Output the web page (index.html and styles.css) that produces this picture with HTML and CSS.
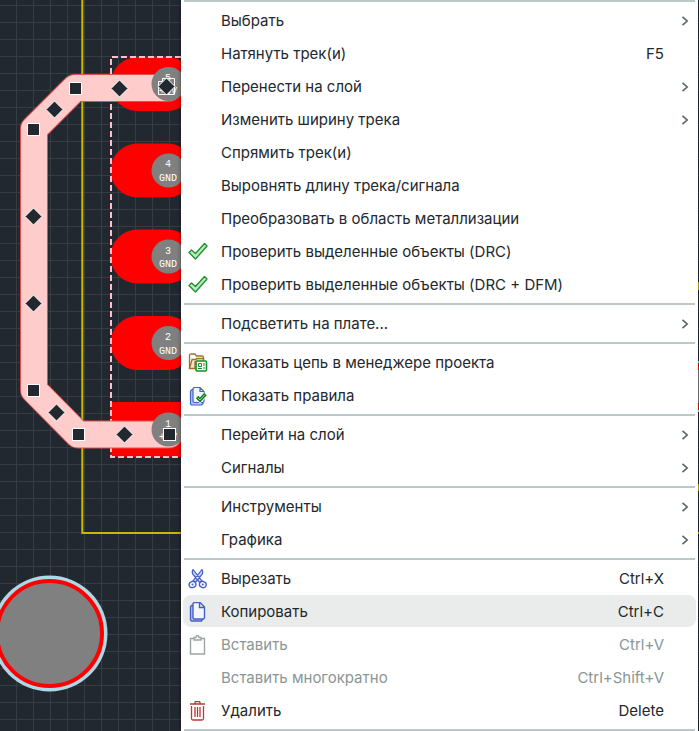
FILE: index.html
```html
<!DOCTYPE html>
<html lang="ru">
<head>
<meta charset="utf-8">
<meta name="viewport" content="width=device-width, initial-scale=1">
<title>Редактор плат</title>
<link rel="stylesheet" href="styles.css">
</head>
<body>
<main class="editor">
  <svg class="board" aria-hidden="true">
    <defs>
      <pattern id="grid" x="16" y="5" width="17" height="17" patternUnits="userSpaceOnUse">
        <path class="grid-line" d="M0 0h17v1H1v16H0z"/>
      </pattern>
      <rect id="pad" x="110.500" y="-27" width="84" height="54" rx="27"/>
      <rect id="node" x="-6" y="-6" width="12" height="12"/>
      <path id="mid" d="M0-8.500L8.500 0 0 8.500-8.500 0z"/>
      <path id="route" d="M168 88H75L34 129V390L78 434.500H169"/>
    </defs>
    <rect width="100%" height="100%" fill="url(#grid)"/>
    <path class="outline" d="M82.300-2V533H699"/>
    <path class="outline-edge" d="M698.500 282v8M698.500 484v7"/>
    <g class="copper">
      <use href="#pad" y="84"/>
      <use href="#pad" y="170.500"/>
      <use href="#pad" y="256.500"/>
      <use href="#pad" y="343"/>
      <rect x="110.500" y="402" width="84" height="55"/>
    </g>
    <path class="bounds" d="M190 57H111V457H190"/>
    <use class="track-edge" href="#route"/>
    <use class="track" href="#route"/>
    <g class="hole">
      <circle cx="168.500" cy="84" r="17"/>
      <circle cx="168.500" cy="170.500" r="17"/>
      <circle cx="168.500" cy="256.500" r="17"/>
      <circle cx="168.500" cy="343" r="17"/>
      <circle cx="168.500" cy="429.500" r="17"/>
    </g>
    <g class="pin">
      <text x="168" y="81">5</text><text x="168" y="94">+5V</text>
      <text x="168" y="167">4</text><text x="168" y="181">GND</text>
      <text x="168" y="254">3</text><text x="168" y="267">GND</text>
      <text x="168" y="340">2</text><text x="168" y="354">GND</text>
      <text x="168" y="427">1</text><text x="168" y="440">+5V</text>
    </g>
    <g class="handle">
      <use href="#node" x="75.500" y="88.500"/>
      <use href="#node" x="33.500" y="129.500"/>
      <use href="#node" x="33.500" y="390.500"/>
      <use href="#node" x="78.500" y="434.500"/>
      <use href="#node" x="169.500" y="434.500"/>
      <use href="#mid" x="119.500" y="88.500"/>
      <use href="#mid" x="54.500" y="109.500"/>
      <use href="#mid" x="33.500" y="216.500"/>
      <use href="#mid" x="33.500" y="303.500"/>
      <use href="#mid" x="56.500" y="412.500"/>
      <use href="#mid" x="124.500" y="434.500"/>
      <path class="hollow" d="M158.500 94.500v-13h4v-3h12v16z"/>
      <use href="#mid" x="166.500" y="86.500"/>
    </g>
    <circle class="mask" cx="49.500" cy="633.500" r="58"/>
    <circle class="ring" cx="49.500" cy="633.500" r="52.500"/>
    <path class="mask-edge" d="M698.500 361v51"/>
    <path class="ring-edge" d="M698.500 363v47"/>
    <path class="hole-edge" d="M698.500 370v33"/>
  </svg>

  <div class="menu" role="menu">
    <hr>
    <button class="item" role="menuitem"><span class="icon"></span><span class="label">Выбрать</span><svg class="arrow" viewBox="0 0 8 10"><path d="M1.500 .8l4.700 4.200-4.700 4.200"/></svg></button>
    <button class="item" role="menuitem"><span class="icon"></span><span class="label">Натянуть трек(и)</span><kbd>F5</kbd></button>
    <button class="item" role="menuitem"><span class="icon"></span><span class="label">Перенести на слой</span><svg class="arrow" viewBox="0 0 8 10"><path d="M1.500 .8l4.700 4.200-4.700 4.200"/></svg></button>
    <button class="item" role="menuitem"><span class="icon"></span><span class="label">Изменить ширину трека</span><svg class="arrow" viewBox="0 0 8 10"><path d="M1.500 .8l4.700 4.200-4.700 4.200"/></svg></button>
    <button class="item" role="menuitem"><span class="icon"></span><span class="label">Спрямить трек(и)</span></button>
    <button class="item" role="menuitem"><span class="icon"></span><span class="label">Выровнять длину трека/сигнала</span></button>
    <button class="item" role="menuitem"><span class="icon"></span><span class="label">Преобразовать в область металлизации</span></button>
    <button class="item" role="menuitem"><svg class="icon check" viewBox="0 0 20 20"><path d="M1 10.500l2.500-2.500 4 3.500L16.500 1.500l2.500 2.500L7.500 17z"/></svg><span class="label">Проверить выделенные объекты (DRC)</span></button>
    <button class="item" role="menuitem"><svg class="icon check" viewBox="0 0 20 20"><path d="M1 10.500l2.500-2.500 4 3.500L16.500 1.500l2.500 2.500L7.500 17z"/></svg><span class="label">Проверить выделенные объекты (DRC + DFM)</span></button>
    <hr>
    <button class="item" role="menuitem"><span class="icon"></span><span class="label">Подсветить на плате...</span><svg class="arrow" viewBox="0 0 8 10"><path d="M1.500 .8l4.700 4.200-4.700 4.200"/></svg></button>
    <hr>
    <button class="item" role="menuitem"><svg class="icon" viewBox="0 0 20 20"><path class="folder" d="M1.500 15.500V2.500q0-1.500 1.500-1.500h4l1.500 2H14q1.500 0 1.500 1.500v3"/><path class="folder front" d="M1.500 15.500L4 6.500h4l1-1h6.500V9H7v6.500z"/><rect class="net" x="8" y="8" width="10.500" height="10" rx="1"/><path class="net thin" d="M10.500 10.500h3v3h-3zM16 10v3M16 14v2M10 15.500h4"/></svg><span class="label">Показать цепь в менеджере проекта</span></button>
    <button class="item" role="menuitem"><svg class="icon" viewBox="0 0 20 20"><path class="page back" d="M5.500 3.500H4L2.500 5v13l1 1h10l1.500-1.500z"/><path class="page" d="M6 1.500h6l4 4v10l-1 1H6l-1-1v-13zM12 1.500v4h4"/><path class="tick-back" d="M9 11l3 3 5.500-6"/><path class="tick" d="M9 11l3 3 5.500-6"/><path class="tick-core" d="M9.500 11.500l2.500 2.500 5-5.500"/></svg><span class="label">Показать правила</span></button>
    <hr>
    <button class="item" role="menuitem"><span class="icon"></span><span class="label">Перейти на слой</span><svg class="arrow" viewBox="0 0 8 10"><path d="M1.500 .8l4.700 4.200-4.700 4.200"/></svg></button>
    <button class="item" role="menuitem"><span class="icon"></span><span class="label">Сигналы</span><svg class="arrow" viewBox="0 0 8 10"><path d="M1.500 .8l4.700 4.200-4.700 4.200"/></svg></button>
    <hr>
    <button class="item" role="menuitem"><span class="icon"></span><span class="label">Инструменты</span><svg class="arrow" viewBox="0 0 8 10"><path d="M1.500 .8l4.700 4.200-4.700 4.200"/></svg></button>
    <button class="item" role="menuitem"><span class="icon"></span><span class="label">Графика</span><svg class="arrow" viewBox="0 0 8 10"><path d="M1.500 .8l4.700 4.200-4.700 4.200"/></svg></button>
    <hr>
    <button class="item" role="menuitem"><svg class="icon bold" viewBox="0 0 20 20"><path class="blade" d="M5 .5Q3.500 3 5 5.500l7 8.500 2-2zM14 .5q1.500 2.500 0 5L7 14l-2-2z"/><ellipse class="page" cx="4.500" cy="15.500" rx="3.400" ry="3" transform="rotate(-20 4.500 15.500)"/><ellipse class="page" cx="14.800" cy="15.500" rx="3.400" ry="3" transform="rotate(20 14.800 15.500)"/><circle class="dot" cx="4.500" cy="15.500" r="1"/><circle class="dot" cx="14.800" cy="15.500" r="1"/></svg><span class="label">Вырезать</span><kbd>Ctrl+X</kbd></button>
    <button class="item active" role="menuitem"><svg class="icon bold" viewBox="0 0 20 20"><path class="page back" d="M5 3.500H3.500l-1 1V18l1 1h10l1-1.500z"/><path class="page" d="M6 .5h6l4.500 4.500v11l-1 1H6l-1-1v-14.500zM11.500.5V5.500h5"/></svg><span class="label">Копировать</span><kbd>Ctrl+C</kbd></button>
    <button class="item" role="menuitem" disabled><svg class="icon clip" viewBox="0 0 20 20"><path d="M6 3.500H2.500v15.500h14V3.500H13M6 5V2.500h2q.2-2 1.500-2t1.500 2h2V5z"/></svg><span class="label">Вставить</span><kbd>Ctrl+V</kbd></button>
    <button class="item" role="menuitem" disabled><span class="icon"></span><span class="label">Вставить многократно</span><kbd>Ctrl+Shift+V</kbd></button>
    <button class="item" role="menuitem"><svg class="icon bin" viewBox="0 0 20 20"><path d="M2 3h15M7 2.500V1.500q0-1 1-1h3q1 0 1 1V2.500M3.500 5V17.500q0 1.500 1.500 1.500h9q1.500 0 1.500-1.500V5M7 6v10M9.500 6v10M12 6v10"/></svg><span class="label">Удалить</span><kbd>Delete</kbd></button>
    <hr>
  </div>
</main>
</body>
</html>
```
FILE: styles.css
```css
* { box-sizing: border-box; }

body {
  margin: 0;
  font-family: Inter, "Noto Sans", sans-serif;
  font-size: 15px;
  font-weight: 400;
}

.editor {
  position: relative;
  min-height: 100vh;
  padding: 0 1px 0 181px;
  background: #22282f;
}

/* Board canvas under the menu */
.board {
  position: absolute;
  inset: 0;
  width: 100%;
  height: 100%;
}
.grid-line { fill: #373c43; }
.outline { fill: none; stroke: #c8b800; stroke-width: 2; }
.outline-edge { stroke: #c8b800; }
.copper { fill: #f00; }
.bounds { fill: none; stroke: #ffc0cb; stroke-width: 2; stroke-dasharray: 6 3; }
.track, .track-edge { fill: none; stroke-linejoin: round; stroke-linecap: round; }
.track-edge { stroke: #e05050; stroke-width: 28; }
.track { stroke: #fcc; stroke-width: 26; }
.hole { fill: #808080; }
.pin { fill: #fff; font-family: "Liberation Mono", monospace; font-size: 10px; text-anchor: middle; }
.handle { fill: #22282f; stroke: #fff; stroke-width: 1; }
.hollow { fill: none; }
.mask { fill: #add8e6; }
.ring { fill: #808080; stroke: #f00; stroke-width: 4; }
.mask-edge { stroke: #add8e6; }
.ring-edge { stroke: #f00; }
.hole-edge { stroke: #808080; }

/* Context menu */
.menu {
  position: relative;
  display: flex;
  flex-direction: column;
  min-height: 100vh;
  padding: 0 2px;
  background: #fff;
  box-shadow: 0 0 4px rgba(0, 0, 0, 0.5);
}
.menu hr {
  flex: none;
  height: 2px;
  margin: 2px 1px;
  border: 0;
  background: #bcc8c8;
}
.menu hr:first-child { margin-top: 0; }
.menu hr:last-child { margin-bottom: 0; }

.item {
  display: flex;
  flex: none;
  align-items: center;
  height: 32px;
  margin: 0 0 1px;
  padding: 2px 7px 0 5px;
  border: 0;
  border-radius: 8px;
  background: none;
  color: #23282d;
  font: inherit;
  line-height: 20px;
  text-align: left;
}
.item.active { background: #eaecec; }
.item:disabled { color: #8a9696; }
.label { flex: 1; margin-left: 13px; }
.item kbd { margin-right: 25px; font: inherit; }

.arrow { width: 8px; height: 10px; fill: none; stroke: #5a6666; stroke-width: 1.6; }
.icon { flex: none; width: 20px; height: 20px; fill: none; }
.check { fill: #b9ecc0; stroke: #219030; stroke-width: 1.4; stroke-linejoin: round; }
.folder { fill: #fff; stroke: #9a7326; stroke-width: 1.3; }
.front { fill: #f1e3cc; }
.net { fill: #fff; stroke: #15902a; stroke-width: 1.6; }
.thin { stroke-width: 1; }
.page { fill: #f3f5ff; stroke: #4560c8; stroke-width: 1.2; }
.back { fill: #b9c5f2; }
.tick-back { stroke: #fff; stroke-width: 5; }
.tick { stroke: #0a7d1c; stroke-width: 3.4; }
.tick-core { stroke: #8fdc9a; stroke-width: 1; }
.blade { fill: #c5d0f8; stroke: #4560c8; stroke-width: 1.2; }
.bold .page { stroke-width: 1.4; }
.dot { fill: #4560c8; }
.clip { stroke: #9aa5a5; stroke-width: 1.4; }
.bin { stroke: #b83a36; stroke-width: 1.3; }
```
